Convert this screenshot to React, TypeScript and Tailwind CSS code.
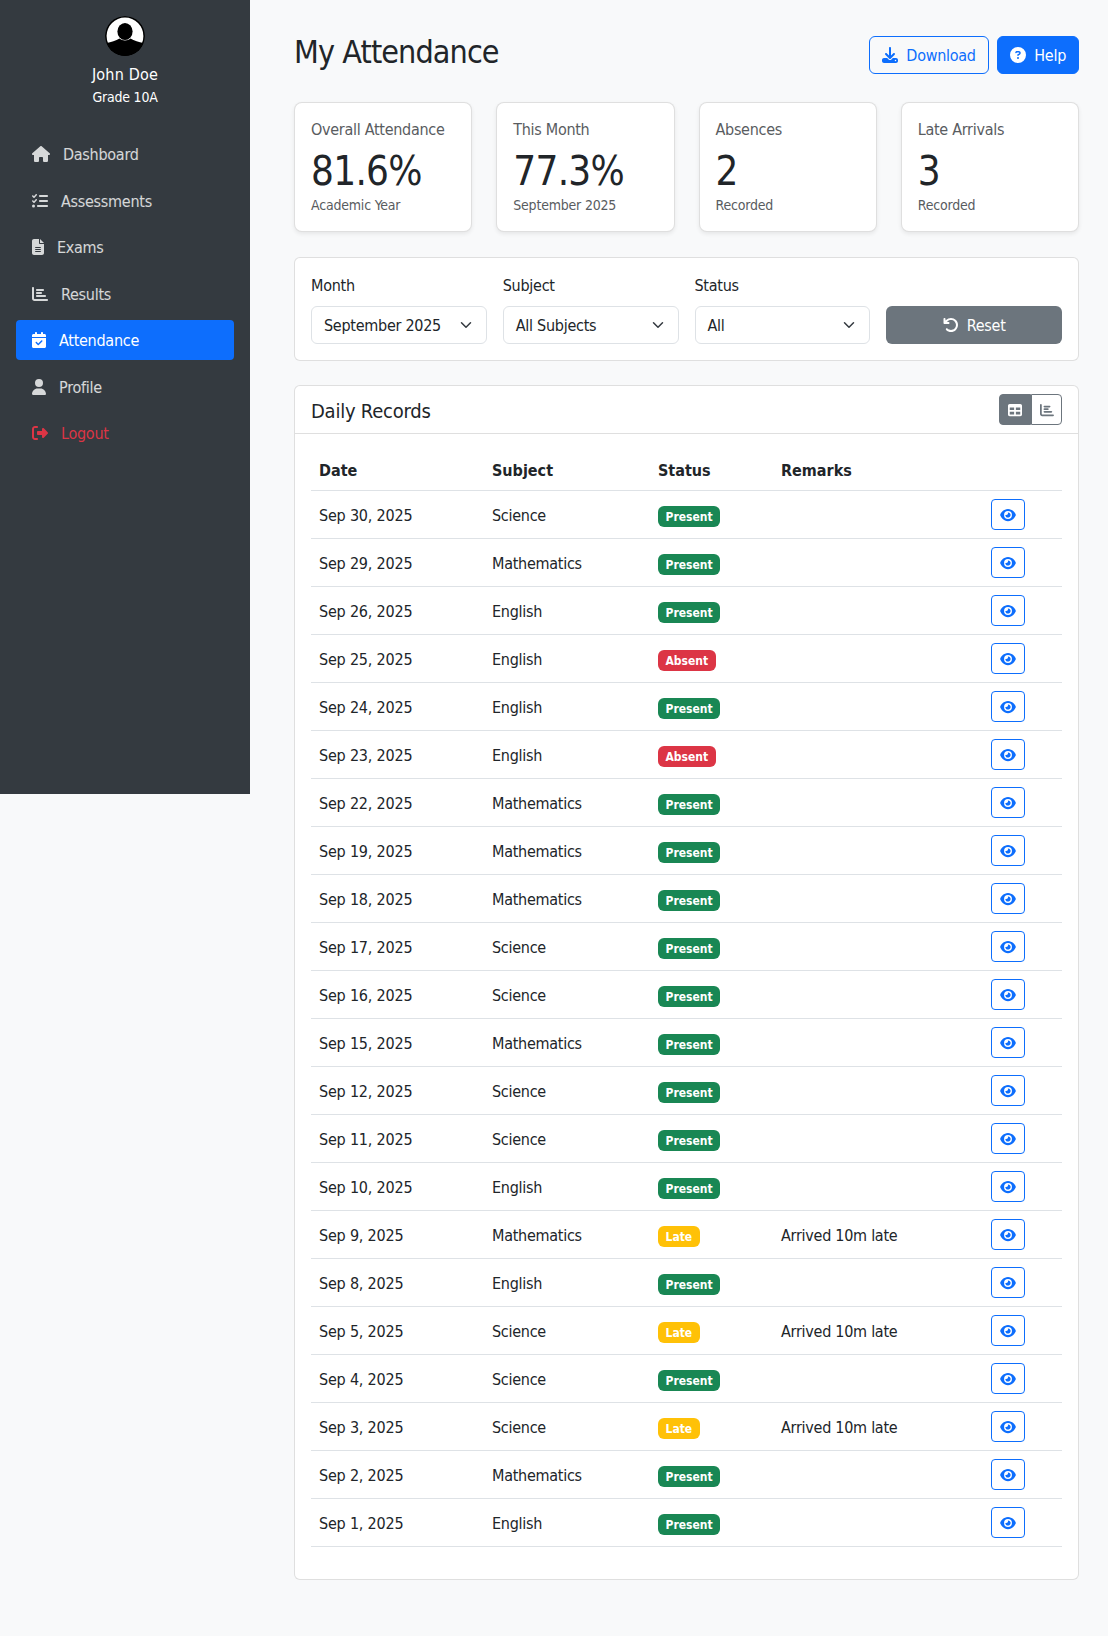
import React from "react";
import {
  FaHouse, FaListCheck, FaFileLines, FaChartBar, FaCalendarCheck, FaUser, FaRightFromBracket,
  FaDownload, FaCircleQuestion, FaArrowRotateLeft, FaTable, FaEye,
} from "react-icons/fa6";

const nav = [
  { label: "Dashboard", icon: FaHouse, w: "w-[18px]" },
  { label: "Assessments", icon: FaListCheck, w: "w-4" },
  { label: "Exams", icon: FaFileLines, w: "w-3" },
  { label: "Results", icon: FaChartBar, w: "w-4" },
  { label: "Attendance", icon: FaCalendarCheck, w: "w-3.5", active: true },
  { label: "Profile", icon: FaUser, w: "w-3.5" },
  { label: "Logout", icon: FaRightFromBracket, w: "w-4", danger: true },
];

const stats = [
  ["Overall Attendance", "81.6%", "Academic Year"],
  ["This Month", "77.3%", "September 2025"],
  ["Absences", "2", "Recorded"],
  ["Late Arrivals", "3", "Recorded"],
];

const filters = [
  ["Month", "September 2025"],
  ["Subject", "All Subjects"],
  ["Status", "All"],
];

const L = "Arrived 10m late";
const rows: [string, string, string, string?][] = [
  ["Sep 30, 2025", "Science", "Present"],
  ["Sep 29, 2025", "Mathematics", "Present"],
  ["Sep 26, 2025", "English", "Present"],
  ["Sep 25, 2025", "English", "Absent"],
  ["Sep 24, 2025", "English", "Present"],
  ["Sep 23, 2025", "English", "Absent"],
  ["Sep 22, 2025", "Mathematics", "Present"],
  ["Sep 19, 2025", "Mathematics", "Present"],
  ["Sep 18, 2025", "Mathematics", "Present"],
  ["Sep 17, 2025", "Science", "Present"],
  ["Sep 16, 2025", "Science", "Present"],
  ["Sep 15, 2025", "Mathematics", "Present"],
  ["Sep 12, 2025", "Science", "Present"],
  ["Sep 11, 2025", "Science", "Present"],
  ["Sep 10, 2025", "English", "Present"],
  ["Sep 9, 2025", "Mathematics", "Late", L],
  ["Sep 8, 2025", "English", "Present"],
  ["Sep 5, 2025", "Science", "Late", L],
  ["Sep 4, 2025", "Science", "Present"],
  ["Sep 3, 2025", "Science", "Late", L],
  ["Sep 2, 2025", "Mathematics", "Present"],
  ["Sep 1, 2025", "English", "Present"],
];

function Badge({ status }: { status: string }) {
  const bg = status === "Present" ? "bg-[#198754]" : status === "Absent" ? "bg-[#dc3545]" : "bg-[#ffc107]";
  return (
    <span className={`inline-block ${bg} text-white text-[12px] font-bold leading-[12px] px-[7.5px] py-[4.2px] rounded-[6px] align-baseline`}>
      {status}
    </span>
  );
}

function Chevron() {
  return (
    <svg viewBox="0 0 16 16" className="w-4 h-3" fill="none" stroke="#343a40" strokeWidth="2" strokeLinecap="round" strokeLinejoin="round">
      <path d="m2 5 6 6 6-6" />
    </svg>
  );
}

function Avatar() {
  return (
    <svg viewBox="0 0 40 40" className="w-10 h-10 rounded-full">
      <circle cx="20" cy="20" r="20" fill="#000" />
      <circle cx="20" cy="20" r="18.4" fill="#fff" />
      <path d="M1.6 27 C6 26 11 25 14.5 22.5 C17 25 23 25 25.5 22.5 C29 25 34 26 38.4 27 C36 35 28 40 20 40 C12 40 4 35 1.6 27 Z" fill="#000" />
      <ellipse cx="20" cy="15.5" rx="7.6" ry="8.6" fill="#000" />
    </svg>
  );
}

export default function App() {
  return (
    <div className="min-h-[1636px] bg-[#f8f9fa] flex items-start text-[#212529] text-base font-['DejaVu_Sans_Condensed','DejaVu_Sans',sans-serif]">
      <aside className="w-[250px] h-[794px] shrink-0 bg-[#343a40] text-white px-4 pt-4">
        <div className="flex flex-col items-center">
          <Avatar />
          <div className="mt-[7px] leading-6 tracking-[0.2px]">John Doe</div>
          <div className="text-[14px] leading-[20px] tracking-[-0.2px]">Grade 10A</div>
        </div>
        <nav className="mt-[27px] flex flex-col gap-[6.5px] tracking-[-0.27px]">
          {nav.map((n) => {
            const Icon = n.icon;
            const color = n.active
              ? "bg-[#0d6efd] text-white"
              : n.danger
              ? "text-[#dc3545]"
              : "text-white/80";
            return (
              <div key={n.label} className={`h-10 flex items-center px-4 gap-[13px] rounded-[4px] ${color}`}>
                <Icon className={`${n.w} h-4 shrink-0`} />
                <span className="pt-[2px]">{n.label}</span>
              </div>
            );
          })}
        </nav>
      </aside>

      <main className="flex-1 pl-[44px] pr-[29px] pt-[36px]">
        <div className="flex items-center justify-between h-[38px]">
          <h1 className="text-[32px] leading-[38px] font-normal tracking-[-0.9px] pb-[6px]">My Attendance</h1>
          <div className="flex gap-2 tracking-[-0.27px]">
            <button className="h-[38px] px-[12.5px] flex items-center gap-[8px] border border-[#0d6efd] text-[#0d6efd] rounded-[6px]">
              <FaDownload className="w-4 h-4" />
              <span className="pt-[2px]">Download</span>
            </button>
            <button className="h-[38px] px-3 flex items-center gap-[8px] border border-[#0d6efd] bg-[#0d6efd] text-white rounded-[6px]">
              <FaCircleQuestion className="w-4 h-4" />
              <span className="pt-[2px]">Help</span>
            </button>
          </div>
        </div>

        <div className="mt-[28px] grid grid-cols-4 gap-6">
          {stats.map(([a, b, c]) => (
            <div key={a} className="h-[130px] bg-white border border-black/[0.125] rounded-[8px] shadow-[0_2px_4px_rgba(0,0,0,0.075)] px-4 pt-[17px]">
              <div className="text-[#595c5f] leading-[20px] tracking-[-0.29px]">{a}</div>
              <div className="text-[40px] leading-[48px] mt-[7px] tracking-[-0.7px]">{b}</div>
              <div className="text-[14px] leading-[21px] text-[#595c5f] tracking-[-0.2px]">{c}</div>
            </div>
          ))}
        </div>

        <div className="mt-[25px] h-[104px] bg-white border border-black/[0.125] rounded-[6px] p-4 grid grid-cols-4 gap-4 tracking-[-0.27px]">
          {filters.map(([label, value]) => (
            <div key={label}>
              <div className="leading-6 mb-2">{label}</div>
              <div className="h-[38px] border border-[#dee2e6] rounded-[6px] pl-3 pr-3 flex items-center justify-between bg-white">
                <span className="pt-[2px]">{value}</span>
                <Chevron />
              </div>
            </div>
          ))}
          <div className="flex items-end">
            <button className="w-full h-[38px] bg-[#6c757d] text-white rounded-[6px] flex items-center justify-center gap-[8px]">
              <FaArrowRotateLeft className="w-4 h-4" />
              <span className="pt-[2px]">Reset</span>
            </button>
          </div>
        </div>

        <div className="mt-[24px] bg-white border border-black/[0.125] rounded-[6px]">
          <div className="h-[48px] border-b border-black/[0.125] px-4 flex items-center justify-between">
            <h2 className="text-[20px] leading-6 font-normal tracking-[-0.24px] pt-[2px]">Daily Records</h2>
            <div className="flex h-[31px]">
              <button className="w-[32px] bg-[#6c757d] text-white border border-[#6c757d] rounded-l-[4px] flex items-center justify-center">
                <FaTable className="w-[14px] h-[14px]" />
              </button>
              <button className="w-[31px] bg-white text-[#6c757d] border border-[#6c757d] rounded-r-[4px] flex items-center justify-center">
                <FaChartBar className="w-[14px] h-[14px]" />
              </button>
            </div>
          </div>
          <div className="p-4">
            <table className="w-full table-fixed border-collapse mb-4">
              <colgroup>
                <col className="w-[173px]" />
                <col className="w-[166px]" />
                <col className="w-[123px]" />
                <col className="w-[210px]" />
                <col />
              </colgroup>
              <thead>
                <tr className="border-b border-[#dee2e6]">
                  <th className="px-2 pt-[9px] pb-[7px] text-left font-bold leading-6">Date</th>
                  <th className="px-2 pt-[9px] pb-[7px] text-left font-bold leading-6">Subject</th>
                  <th className="px-2 pt-[9px] pb-[7px] text-left font-bold leading-6">Status</th>
                  <th className="px-2 pt-[9px] pb-[7px] text-left font-bold leading-6">Remarks</th>
                  <th className="p-2"></th>
                </tr>
              </thead>
              <tbody className="tracking-[-0.27px]">
                {rows.map(([d, s, st, r]) => (
                  <tr key={d} className="border-b border-[#dee2e6]">
                    <td className="px-2 pt-[9px] pb-[7px] leading-6 tracking-[-0.2px]">{d}</td>
                    <td className="px-2 pt-[9px] pb-[7px] leading-6">{s}</td>
                    <td className="px-2 pt-[9px] pb-[7px] leading-6 tracking-normal"><Badge status={st} /></td>
                    <td className="px-2 pt-[9px] pb-[7px] leading-6">{r ?? ""}</td>
                    <td className="p-2 h-[47px]">
                      <button className="w-[34px] h-[31px] border border-[#0d6efd] text-[#0d6efd] rounded-[4px] flex items-center justify-center">
                        <FaEye className="w-4 h-[14px]" />
                      </button>
                    </td>
                  </tr>
                ))}
              </tbody>
            </table>
          </div>
        </div>
      </main>
    </div>
  );
}
